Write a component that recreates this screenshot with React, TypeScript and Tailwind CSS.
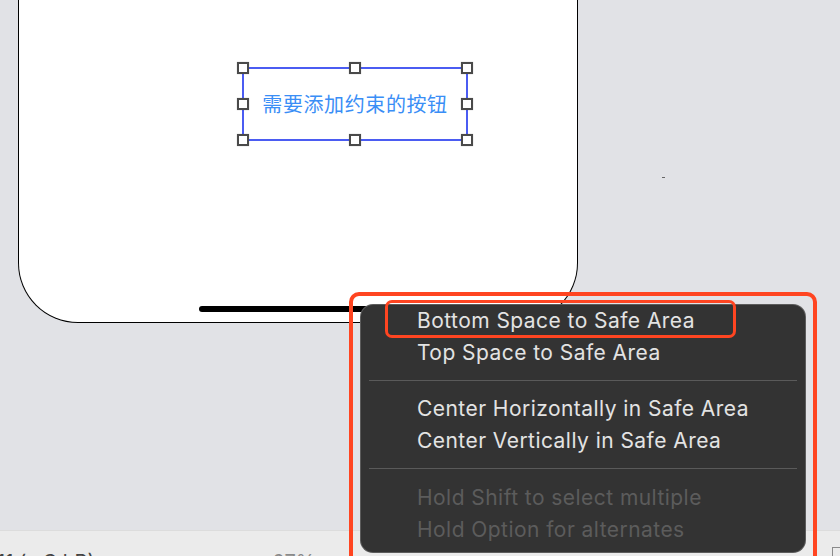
import React from "react";

const MENU_FONT = { fontFamily: "Inter, 'Liberation Sans', sans-serif" };
const CJK_FONT = { fontFamily: "'Noto Sans CJK SC', 'Noto Sans', sans-serif" };

// ─── selection handles ─────────────────────────────────────────────────────
function Handle({ hidden }: { hidden?: boolean }) {
  return (
    <div
      className={`w-[12px] h-[12px] bg-white border-[2px] border-[#4a4a4a] shadow-[0_0_1px_rgba(0,0,0,0.3)] ${hidden ? "invisible" : ""}`}
    />
  );
}

function HandleRow({ middle = true }: { middle?: boolean }) {
  return (
    <div className="flex justify-between">
      <Handle />
      <Handle hidden={!middle} />
      <Handle />
    </div>
  );
}

function SelectedButton() {
  return (
    <div className="relative w-[226px] h-[74px] border-[2px] border-[#4b5cf2] flex items-center justify-center">
      <span className="text-[20px] leading-none text-[#3a8ef6] tracking-[0.6px]" style={CJK_FONT}>
        需要添加约束的按钮
      </span>
      <div className="absolute -inset-[7px] flex flex-col justify-between">
        <HandleRow />
        <HandleRow middle={false} />
        <HandleRow />
      </div>
    </div>
  );
}

// ─── context menu ──────────────────────────────────────────────────────────
function MenuItem({ label, dim }: { label: string; dim?: boolean }) {
  return (
    <div
      className={`h-[32px] flex items-center pl-[56px] text-[21px] tracking-[0.45px] ${dim ? "text-[#5c5c5c]" : "text-[#e3e3e3]"}`}
    >
      {label}
    </div>
  );
}

function Separator({ className = "" }: { className?: string }) {
  return <div className={`mx-[8px] mt-[11px] h-[1px] bg-[#5a5a5a] ${className}`} />;
}

function ContextMenu() {
  return (
    <div className="absolute left-[349px] top-[292px] w-[468px] h-[280px] border-[4px] border-[#ff4521] rounded-[10px] pl-[7px] pt-[8px]">
      <div className="relative w-[446px] h-[249px] bg-[#333333] rounded-[13px] border border-[#9a9a9a]/40" style={MENU_FONT}>
        <MenuItem label="Bottom Space to Safe Area" />
        <MenuItem label="Top Space to Safe Area" />
        <Separator className="mb-[12px]" />
        <MenuItem label="Center Horizontally in Safe Area" />
        <MenuItem label="Center Vertically in Safe Area" />
        <Separator className="mb-[13px]" />
        <MenuItem label="Hold Shift to select multiple" dim />
        <MenuItem label="Hold Option for alternates" dim />
        {/* highlight annotation */}
        <div className="absolute left-[24px] -top-[5px] w-[351px] h-[38px] border-[3px] border-[#ff4521] rounded-[7px]" />
      </div>
    </div>
  );
}

export default function App() {
  return (
    <div className="relative w-[840px] h-[556px] overflow-hidden bg-[#e1e2e6] flex flex-col">
      <div className="flex-1 flex">
        {/* device canvas */}
        <div className="ml-[18px] w-[560px] h-[323px] bg-white border-[1.5px] border-t-0 border-black rounded-b-[60px] flex flex-col">
          <div className="pt-[67px] pl-[223px]">
            <SelectedButton />
          </div>
          <div className="flex-1" />
          <div className="ml-[180px] mb-[10px] w-[200px] h-[6px] rounded-full bg-black" />
        </div>
        <div className="ml-[84px] mt-[177px] w-[3px] h-[1px] bg-[#666]" />
      </div>

      {/* bottom bar */}
      <div
        className="h-[26px] bg-[#ebebeb] border-t border-[#dcdcdc] flex items-start pt-[21px] text-[20px] leading-none text-[#444]"
        style={MENU_FONT}
      >
        <span className="-ml-[3px] w-[275px]">11 (wC hR)</span>
        <span className="text-[#8a8a8a]">67%</span>
        <div className="ml-auto mr-[-6px] flex">
          <div className="w-[14px] h-[14px] -mt-[5px] border border-[#8a8a8a]" />
        </div>
      </div>

      <ContextMenu />
    </div>
  );
}
